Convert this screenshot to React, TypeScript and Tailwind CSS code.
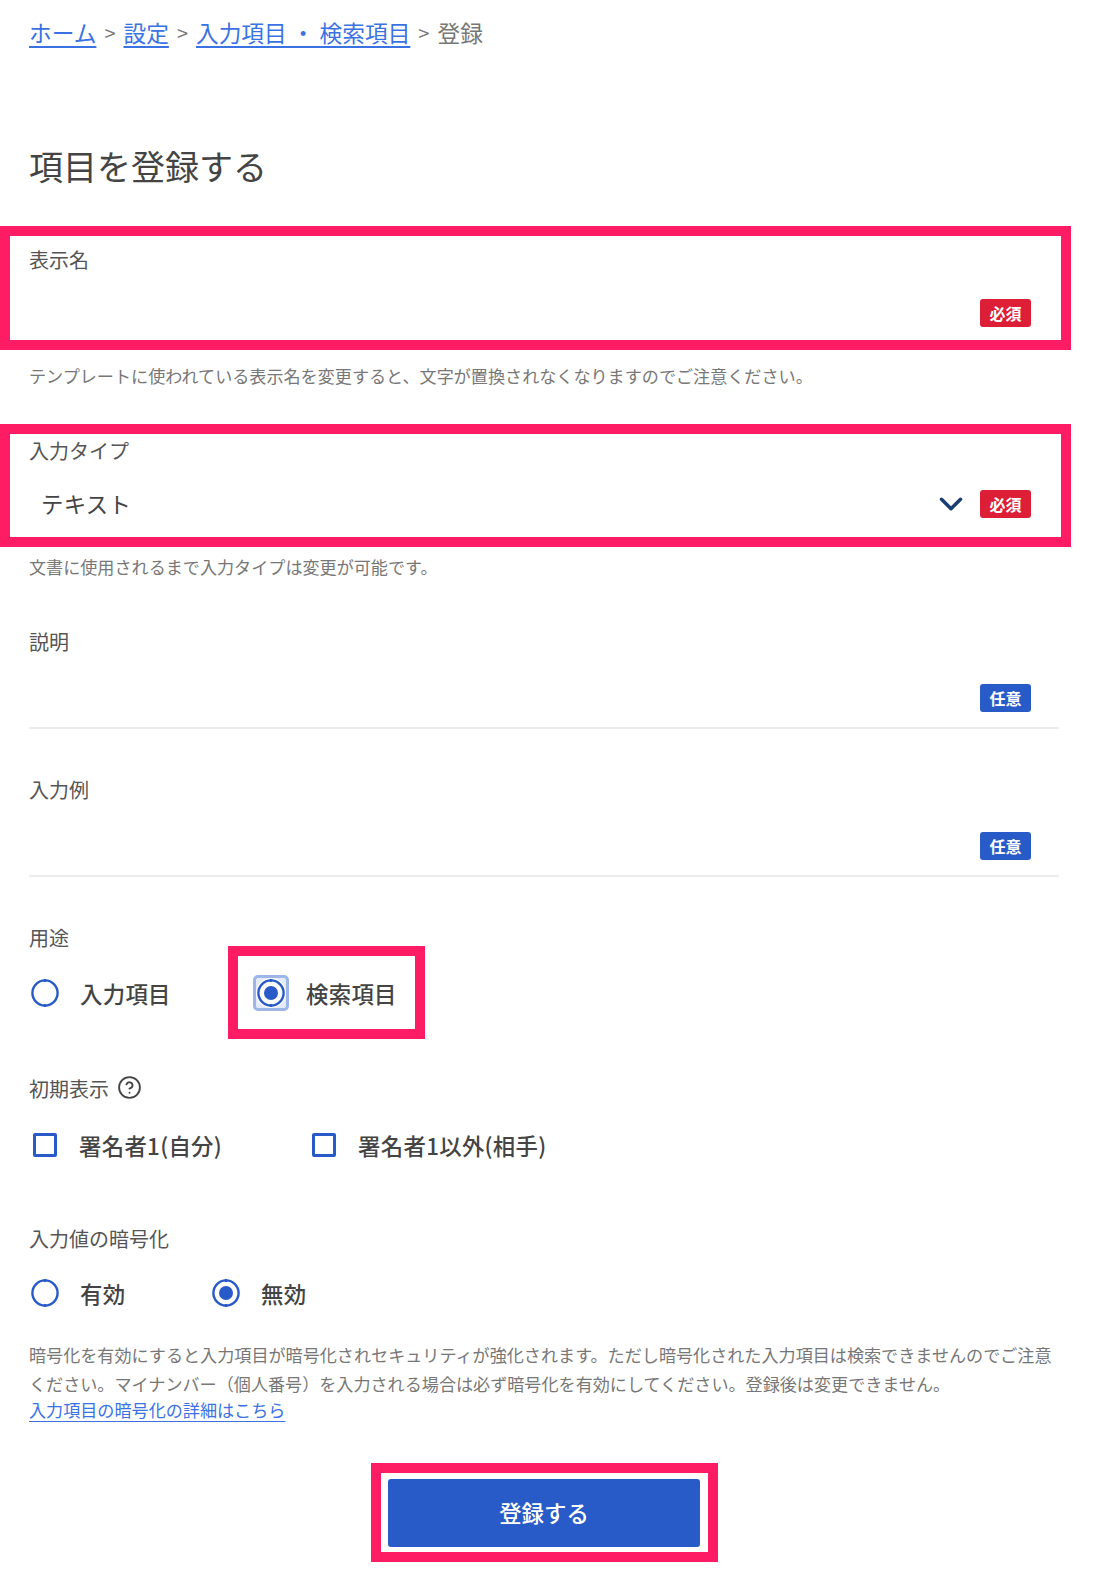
import React from "react";
import { ChevronDown, CircleHelp } from "lucide-react";

const font = "font-['Noto_Sans_CJK_JP','Noto_Sans',sans-serif]";
const link = "text-[#3a72e4] underline underline-offset-4";

function Badge({ kind }: { kind: "req" | "opt" }) {
  return (
    <span
      className={`flex h-[28px] w-[51px] items-center justify-center rounded-[3px] text-[16px] leading-none font-bold text-white ${
        kind === "req" ? "bg-[#dc1e36]" : "bg-[#295bc8]"
      }`}
    >
      {kind === "req" ? "必須" : "任意"}
    </span>
  );
}

function Label({ children }: { children: React.ReactNode }) {
  return <div className="h-[28px] text-[20px] leading-[28px] text-[#555]">{children}</div>;
}

function Radio({ on }: { on?: boolean }) {
  return (
    <svg width="30" height="30" viewBox="0 0 30 30" className="shrink-0">
      <circle cx="15" cy="15" r="12.6" fill="none" stroke="#295bc8" strokeWidth="2.4" />
      <path d="M15 1v3M15 26v3" stroke="#295bc8" strokeWidth="2.4" />
      {on && <circle cx="15" cy="15" r="7" fill="#295bc8" />}
    </svg>
  );
}

function Check() {
  return <span className="h-[24px] w-[24px] shrink-0 rounded-[2px] border-[3px] border-[#295bc8]" />;
}

function Option({ children }: { children: React.ReactNode }) {
  return <span className="text-[22.4px] leading-[30px] font-medium tracking-[0.3px] text-[#444]">{children}</span>;
}

function TextField({ label }: { label: string }) {
  return (
    <div className="h-[101px] w-[1030px] border-b-2 border-[#ececec]">
      <Label>{label}</Label>
      <div className="mt-[28px] flex justify-end pr-[28px]">
        <Badge kind="opt" />
      </div>
    </div>
  );
}

export default function App() {
  return (
    <div className={`${font} h-[1570px] w-[1099px] overflow-hidden bg-white`}>
      <nav className="flex h-[66px] items-center gap-[8px] pl-[29px] text-[22.7px] leading-none text-[#777]">
        <a className={link}>ホーム</a>
        <span className="text-[20px]">&gt;</span>
        <a className={link}>設定</a>
        <span className="text-[20px]">&gt;</span>
        <a className={link}>入力項目 ・ 検索項目</a>
        <span className="text-[20px]">&gt;</span>
        <span>登録</span>
      </nav>

      <h1 className="mt-[73px] h-[54px] pl-[29px] text-[34px] leading-[54px] text-[#444]">項目を登録する</h1>

      <section className="mt-[33px] h-[124px] w-[1071px] border-[10px] border-[#fe1c64] pl-[19px] pt-[10px]">
        <Label>表示名</Label>
        <div className="mt-[25px] flex justify-end pr-[30px]">
          <Badge kind="req" />
        </div>
      </section>
      <p className="mt-[13px] h-[26px] pl-[29px] text-[17.1px] leading-[26px] text-[#777]">
        テンプレートに使われている表示名を変更すると、文字が置換されなくなりますのでご注意ください。
      </p>

      <section className="mt-[35px] h-[123px] w-[1071px] border-[10px] border-[#fe1c64] pl-[19px]">
        <div className="pt-[3px]">
          <Label>入力タイプ</Label>
        </div>
        <div className="mt-[19px] flex h-[40px] items-center justify-between pl-[12px] pr-[30px]">
          <span className="text-[22.4px] tracking-[0.3px] text-[#444]">テキスト</span>
          <div className="flex items-center gap-[10px]">
            <ChevronDown size={38} strokeWidth={2.2} className="text-[#1b3e76]" />
            <Badge kind="req" />
          </div>
        </div>
      </section>
      <p className="mt-[7px] h-[26px] pl-[29px] text-[17.1px] leading-[26px] text-[#777]">
        文書に使用されるまで入力タイプは変更が可能です。
      </p>

      <div className="mt-[48px] pl-[29px]">
        <TextField label="説明" />
        <div className="mt-[47px]">
          <TextField label="入力例" />
        </div>
      </div>

      <div className="mt-[47px] pl-[29px]">
        <Label>用途</Label>
      </div>
      <div className="-mt-[6px] flex h-[93px] items-center pl-[30px]">
        <label className="flex w-[198px] items-center gap-[20px]">
          <Radio />
          <Option>入力項目</Option>
        </label>
        <label className="flex h-[93px] w-[197px] items-center gap-[17px] border-[10px] border-[#fe1c64] pl-[15px]">
          <span className="flex h-[36px] w-[36px] shrink-0 items-center justify-center rounded-[5px] border-[3px] border-[#9db6e8] bg-[#e4ebfa]">
            <span className="flex rounded-full bg-white">
              <Radio on />
            </span>
          </span>
          <Option>検索項目</Option>
        </label>
      </div>

      <div className="mt-[36px] flex h-[28px] items-center gap-[8px] pl-[29px]">
        <Label>初期表示</Label>
        <CircleHelp size={25} strokeWidth={1.8} className="-mt-[4px] text-[#444]" />
      </div>
      <div className="mt-[27px] flex h-[30px] items-center pl-[33px]">
        <label className="flex items-center gap-[22px]">
          <Check />
          <Option>署名者1(自分)</Option>
        </label>
        <label className="ml-[90px] flex items-center gap-[22px]">
          <Check />
          <Option>署名者1以外(相手)</Option>
        </label>
      </div>

      <div className="mt-[65px] pl-[29px]">
        <Label>入力値の暗号化</Label>
      </div>
      <div className="mt-[25px] flex h-[30px] items-center pl-[30px]">
        <label className="flex w-[181px] items-center gap-[20px]">
          <Radio />
          <Option>有効</Option>
        </label>
        <label className="flex items-center gap-[20px]">
          <Radio on />
          <Option>無効</Option>
        </label>
      </div>

      <div className="mt-[32px] w-[1060px] pl-[29px] text-[17.1px] leading-[29px] text-[#777]">
        <p>暗号化を有効にすると入力項目が暗号化されセキュリティが強化されます。ただし暗号化された入力項目は検索できませんのでご注意ください。マイナンバー（個人番号）を入力される場合は必ず暗号化を有効にしてください。登録後は変更できません。</p>
        <a className="block leading-[24px] text-[#3a72e4] underline underline-offset-4">入力項目の暗号化の詳細はこちら</a>
      </div>

      <div className="mt-[41px] flex justify-start pl-[371px]">
        <div className="h-[99px] w-[347px] border-[10px] border-[#fe1c64] pl-[7px] pt-[6px]">
          <button className="h-[68px] w-[312px] rounded-[3px] bg-[#295bc8] text-[22.4px] font-medium text-white">登録する</button>
        </div>
      </div>
    </div>
  );
}
